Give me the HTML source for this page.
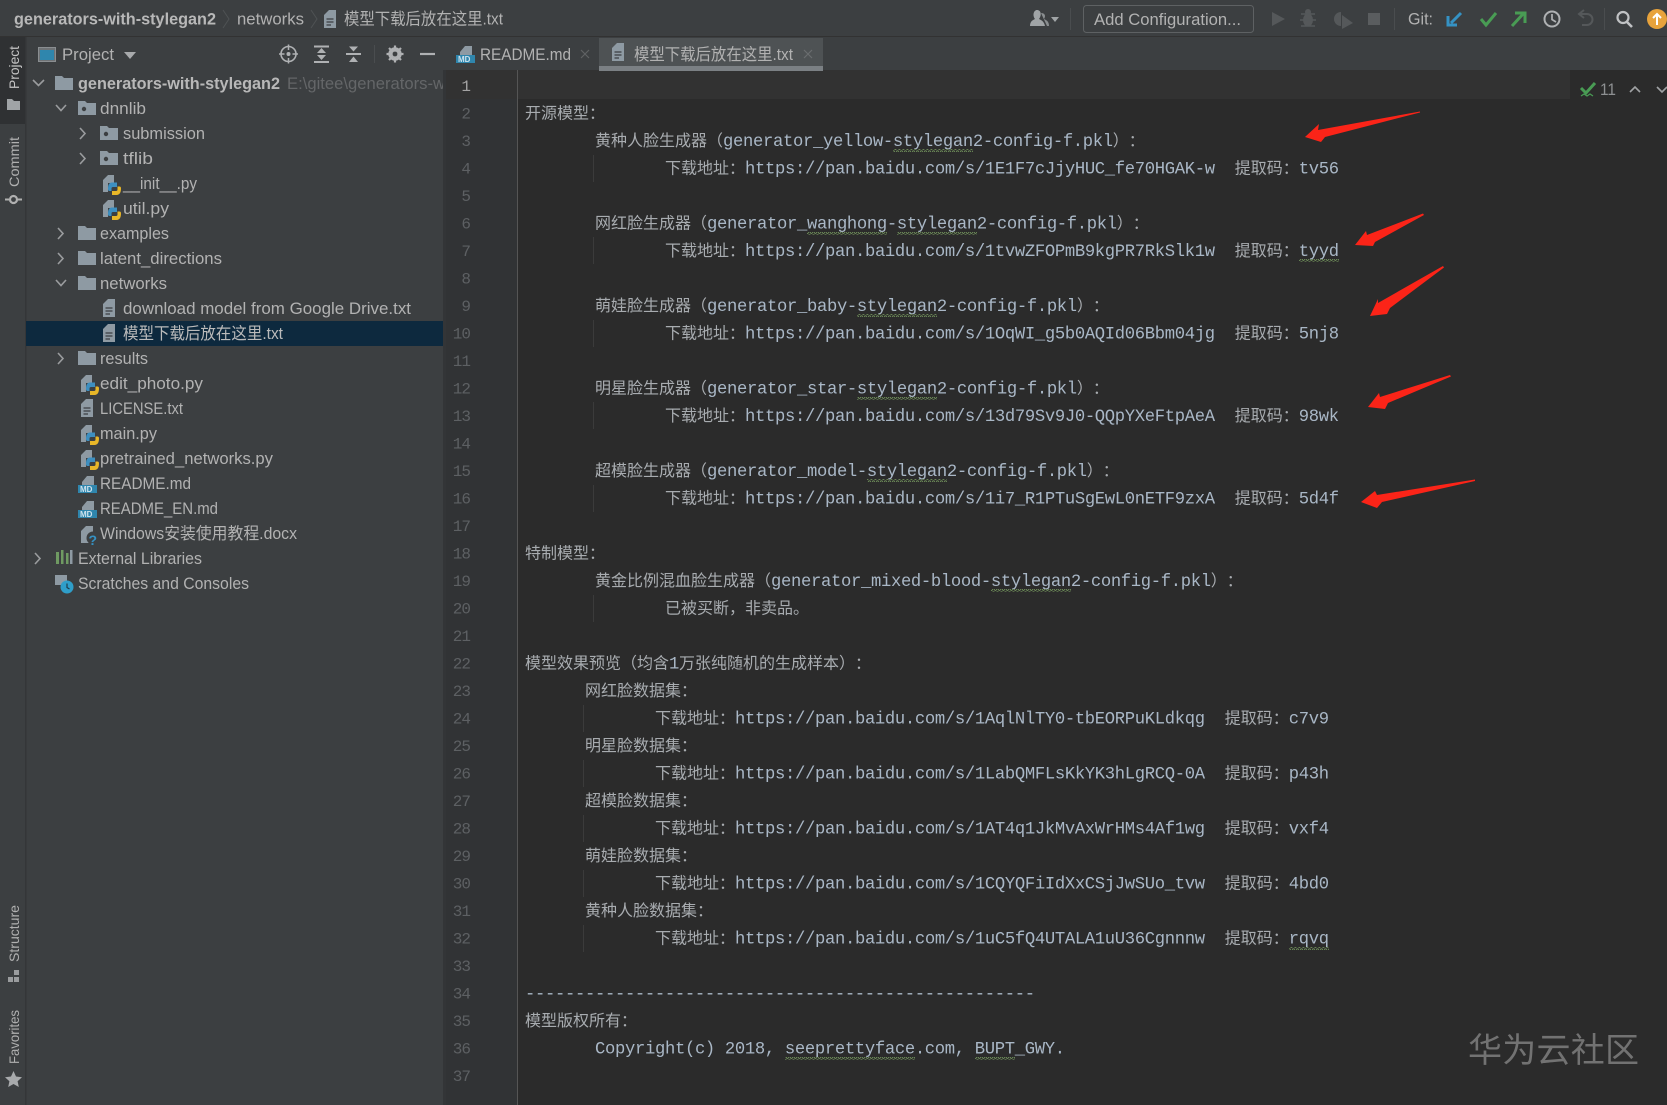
<!DOCTYPE html>
<html lang="zh"><head><meta charset="utf-8"><title>generators-with-stylegan2</title>
<style>
html,body{margin:0;padding:0;background:#2b2b2b;width:1667px;height:1105px;overflow:hidden}
svg{display:block}
text{white-space:pre;text-spacing-trim:space-all}
.u{font-family:"Liberation Sans","Noto Sans CJK SC",sans-serif;font-size:16.5px;fill:#b2b2b2}
.b{font-weight:700;fill:#b8b8b8}
.m{font-family:"Liberation Mono",monospace;font-size:17.2px;letter-spacing:-.32px;fill:#a9b7c6}
.c{font-family:"Noto Sans CJK SC",sans-serif;font-size:16px;letter-spacing:0;fill:#a8acb0}
.n{font-family:"Liberation Mono",monospace;font-size:16px;letter-spacing:-1px;fill:#5d6063;text-anchor:end}
.v{font-family:"Liberation Sans",sans-serif;font-size:14px;fill:#b0b0b0}
</style></head><body>
<svg xmlns="http://www.w3.org/2000/svg" width="1667" height="1105" viewBox="0 0 1667 1105">
<defs>
<pattern id="sq" width="4" height="3" patternUnits="userSpaceOnUse"><path d="M0 2.4L1 .8 2 .8 3 2.4 4 2.4" fill="none" stroke="#6f8f5a" stroke-width=".9"/></pattern>
<symbol id="folder" width="18" height="15" viewBox="0 0 18 15" overflow="visible"><path d="M0 1H7L9 3H18V15H0Z" fill="#8e9aa3"/></symbol>
<symbol id="pkg" width="18" height="15" viewBox="0 0 18 15" overflow="visible"><path d="M0 1H7L9 3H18V15H0Z" fill="#8e9aa3"/><circle cx="6" cy="9" r="2.2" fill="#3c3f41"/></symbol>
<symbol id="file" width="14" height="20" viewBox="0 0 14 20" overflow="visible"><path d="M1 6L6 1H13V19H1Z" fill="#8e9aa3"/><path d="M3.5 10H10.5M3.5 13H10.5M3.5 16H8" stroke="#3c3f41" stroke-width="1.2"/></symbol>
<symbol id="py" width="21" height="22" viewBox="0 0 21 22" overflow="visible"><path d="M1 6L6 1H12V9H6V18H1Z" fill="#8e9aa3"/><path d="M6 15C6 11 7 8.500 10 8.500H15V13H11Q9.500 13 9.500 14.500V17H7.500Q6 17 6 15Z" fill="#3d8fc0"/><path d="M19 14.500C19 18.500 17.500 21 14.500 21H10V17H14Q15.500 17 15.500 15.500V12.500H17.500Q19 12.500 19 14.500Z" fill="#e8b728"/></symbol>
<symbol id="md" width="20" height="20" viewBox="0 0 20 20" overflow="visible"><path d="M4 8L9 2H16V12H4Z" fill="#8e9aa3"/><rect x="0" y="11" width="19" height="8" fill="#2f86ad"/><text x="2" y="18" font-family="Liberation Sans" font-size="8" font-weight="700" fill="#cfe3ee">MD</text></symbol>
</defs>

<!-- base -->
<rect width="1667" height="1105" fill="#2b2b2b"/>
<rect width="1667" height="36" fill="#3c3f41"/>
<rect y="36" width="1667" height="1" fill="#323232"/>
<rect y="37" width="443" height="1068" fill="#3c3f41"/>
<rect x="443" y="37" width="1224" height="33" fill="#3c3f41"/>
<rect x="25" y="37" width="1.5" height="1068" fill="#343638"/>
<rect y="37" width="25" height="87" fill="#2f3133"/>
<rect x="26" y="321" width="417" height="25" fill="#0d293e"/>
<rect x="443" y="70" width="3" height="1035" fill="#333537"/>
<rect x="446" y="70" width="71" height="1035" fill="#313335"/>
<rect x="517" y="70" width="1" height="1035" fill="#555"/>
<rect x="446" y="70" width="71" height="29" fill="#323232"/>
<rect x="518" y="70" width="1052" height="29" fill="#323232"/>

<!-- title bar -->
<text class="u b" x="14" y="24.5" textLength="202" lengthAdjust="spacingAndGlyphs">generators-with-stylegan2</text>
<path d="M223 10L229 19 223 28" fill="none" stroke="#4f5254" stroke-width="1"/>
<text class="u" x="237" y="24.5" textLength="67" lengthAdjust="spacingAndGlyphs">networks</text>
<path d="M311 10L317 19 311 28" fill="none" stroke="#4f5254" stroke-width="1"/>
<use href="#file" x="323" y="9"/>
<text class="u" x="344" y="24.5" textLength="159" lengthAdjust="spacingAndGlyphs">模型下载后放在这里.txt</text>

<path d="M1030 26C1030 21 1033 20 1035 19 1032 15 1034 10 1037 10 1041 10 1042 15 1039 19 1041 20 1044 21 1045 26Z" fill="#a0a4a6"/>
<path d="M1041 13L1047 26H1049C1049 21 1046 20 1044 19 1046 16 1045 13 1041 13Z" fill="#8a8e90"/>
<path d="M1051 17H1059L1055 22Z" fill="#a0a4a6"/>
<rect x="1070" y="8" width="1" height="22" fill="#4a4d4f"/>
<rect x="1083.5" y="5.5" width="170" height="27" rx="3" fill="#3c3f41" stroke="#5e6163"/>
<text class="u" x="1094" y="25" textLength="147" lengthAdjust="spacingAndGlyphs" fill="#b2b2b2">Add Configuration...</text>
<path d="M1272 12L1285 19 1272 26Z" fill="#55585a"/>
<g fill="#55585a"><ellipse cx="1308" cy="20" rx="5" ry="6.5"/><circle cx="1308" cy="12" r="3"/><path d="M1301 14L1315 14M1300 20H1316M1301 26L1315 26" stroke="#55585a" stroke-width="1.5"/></g>
<path d="M1341 12A7 7 0 1 0 1341 26Z" fill="#55585a"/><path d="M1342 15L1353 23 1342 29Z" fill="#55585a"/>
<rect x="1368" y="13" width="12" height="12" fill="#5a5d5f"/>
<rect x="1394" y="8" width="1" height="22" fill="#4a4d4f"/>
<text class="u" x="1408" y="24.5" textLength="25" lengthAdjust="spacingAndGlyphs">Git:</text>
<path d="M1461 13L1451 23M1448 16V25H1457" fill="none" stroke="#3592c4" stroke-width="3"/>
<path d="M1481 19L1486 25 1496 13" fill="none" stroke="#499c54" stroke-width="3"/>
<path d="M1512 26L1523 14M1515 13H1525V23" fill="none" stroke="#499c54" stroke-width="3"/>
<circle cx="1552" cy="19" r="7.5" fill="none" stroke="#afb1b3" stroke-width="2"/><path d="M1552 14V19.5L1556 22" fill="none" stroke="#afb1b3" stroke-width="1.7"/>
<path d="M1580 14H1587A5 5 0 0 1 1587 25H1582M1584 10L1579 14 1584 18" fill="none" stroke="#55585a" stroke-width="2"/>
<rect x="1604" y="8" width="1" height="22" fill="#4a4d4f"/>
<circle cx="1623" cy="17.5" r="5.5" fill="none" stroke="#c0c2c4" stroke-width="2.2"/><path d="M1627 22L1632 27" stroke="#c0c2c4" stroke-width="2.6"/>
<circle cx="1657" cy="19" r="10" fill="#e8a33c"/><path d="M1657 25V14M1653 18L1657 14 1661 18" fill="none" stroke="#fff" stroke-width="2"/>

<!-- left strip -->
<text class="v" transform="translate(19 89) rotate(-90)" textLength="43" lengthAdjust="spacingAndGlyphs" style="fill:#c4c4c4">Project</text>
<path d="M7 99H12L14 101H20V110H7Z" fill="#a0a4a6"/>
<text class="v" transform="translate(19 187) rotate(-90)" textLength="50" lengthAdjust="spacingAndGlyphs">Commit</text>
<circle cx="13.5" cy="199.5" r="3.5" fill="none" stroke="#b0b0b0" stroke-width="2.2"/><path d="M5 199.5H9M18 199.5H22" stroke="#b0b0b0" stroke-width="2"/>
<text class="v" transform="translate(19 962) rotate(-90)" textLength="57" lengthAdjust="spacingAndGlyphs">Structure</text>
<path d="M8 977h5v5h-5zM14 977h5v5h-5zM14 970h5v5h-5z" fill="#9a9c9e"/>
<text class="v" transform="translate(19 1064) rotate(-90)" textLength="54" lengthAdjust="spacingAndGlyphs">Favorites</text>
<path d="M13.5 1071L16 1076.5 22 1077.3 17.6 1081.2 18.8 1087 13.5 1084 8.2 1087 9.4 1081.2 5 1077.3 11 1076.5Z" fill="#a8aaac"/>

<!-- project header -->
<rect x="38.5" y="47.5" width="17" height="14" fill="#6e7275" stroke="#8a8e91"/><rect x="40" y="50" width="14" height="10" fill="#2f86ad"/>
<text class="u" x="62" y="60" textLength="52" lengthAdjust="spacingAndGlyphs">Project</text>
<path d="M124 52H136L130 59Z" fill="#a8aaac"/>
<circle cx="288.5" cy="54" r="7.5" fill="none" stroke="#afb1b3" stroke-width="1.6"/><circle cx="288.5" cy="54" r="2" fill="#afb1b3"/><path d="M288.5 44.5V50M288.5 58V63.5M279 54H284.5M292.5 54H298" stroke="#afb1b3" stroke-width="1.5"/>
<path d="M314 46.5H329M314 62H329" stroke="#afb1b3" stroke-width="2"/><path d="M321.5 48L317 53H326ZM321.5 60L317 55H326Z" fill="#afb1b3"/>
<path d="M346 54H361" stroke="#afb1b3" stroke-width="2"/><path d="M353.5 51.5L349 46.5H358ZM353.5 56.5L349 62H358Z" fill="#afb1b3"/>
<rect x="374" y="45" width="1" height="18" fill="#4a4d4f"/>
<circle cx="395" cy="54" r="5" fill="none" stroke="#afb1b3" stroke-width="3.4"/><path d="M395 45.5V62.5M386.5 54H403.5M389 48L401 60M401 48L389 60" stroke="#afb1b3" stroke-width="2.2"/><circle cx="395" cy="54" r="2.4" fill="#3c3f41"/>
<path d="M420 54H435" stroke="#afb1b3" stroke-width="2.2"/>

<!-- tabs -->
<use href="#md" x="456" y="44"/>
<text class="u" x="480" y="60" textLength="91" lengthAdjust="spacingAndGlyphs">README.md</text>
<path d="M581 50L589 58M589 50L581 58" stroke="#5f6264" stroke-width="1.2"/>
<rect x="599" y="38" width="224" height="33" fill="#4e5254"/>
<rect x="599" y="66" width="224" height="5" fill="#7b8084"/>
<use href="#file" x="611" y="42"/>
<text class="u" x="634" y="60" textLength="159" lengthAdjust="spacingAndGlyphs">模型下载后放在这里.txt</text>
<path d="M804 50L812 58M812 50L804 58" stroke="#6a6d6f" stroke-width="1.2"/>

<!-- tree -->
<path d="M33 80L38.5 85.5 44 80" fill="none" stroke="#9a9c9e" stroke-width="1.6"/><use href="#folder" x="55" y="75"/>
<text class="u b" x="78" y="89" textLength="202" lengthAdjust="spacingAndGlyphs">generators-with-stylegan2</text>
<svg x="287" y="70" width="156" height="30"><text class="u" x="0" y="19" textLength="158" lengthAdjust="spacingAndGlyphs" style="fill:#646668">E:\gitee\generators-w</text></svg>

<path d="M56 105L61 110.5 66 105" fill="none" stroke="#9a9c9e" stroke-width="1.6"/><use href="#pkg" x="78" y="100"/>
<text class="u" x="100" y="114" textLength="46" lengthAdjust="spacingAndGlyphs">dnnlib</text>
<path d="M80 128L85 133.5 80 139" fill="none" stroke="#9a9c9e" stroke-width="1.6"/><use href="#pkg" x="100" y="125"/>
<text class="u" x="123" y="139" textLength="82" lengthAdjust="spacingAndGlyphs">submission</text>
<path d="M80 153L85 158.5 80 164" fill="none" stroke="#9a9c9e" stroke-width="1.6"/><use href="#pkg" x="100" y="150"/>
<text class="u" x="123" y="164" textLength="30" lengthAdjust="spacingAndGlyphs">tflib</text>
<use href="#py" x="102" y="174"/>
<text class="u" x="123" y="189" textLength="74" lengthAdjust="spacingAndGlyphs">__init__.py</text>
<use href="#py" x="102" y="199"/>
<text class="u" x="123" y="214" textLength="46" lengthAdjust="spacingAndGlyphs">util.py</text>
<path d="M58 228L63 233.5 58 239" fill="none" stroke="#9a9c9e" stroke-width="1.6"/><use href="#folder" x="78" y="225"/>
<text class="u" x="100" y="239" textLength="69" lengthAdjust="spacingAndGlyphs">examples</text>
<path d="M58 253L63 258.5 58 264" fill="none" stroke="#9a9c9e" stroke-width="1.6"/><use href="#folder" x="78" y="250"/>
<text class="u" x="100" y="264" textLength="122" lengthAdjust="spacingAndGlyphs">latent_directions</text>
<path d="M56 280L61 285.5 66 280" fill="none" stroke="#9a9c9e" stroke-width="1.6"/><use href="#folder" x="78" y="275"/>
<text class="u" x="100" y="289" textLength="67" lengthAdjust="spacingAndGlyphs">networks</text>
<use href="#file" x="102" y="298"/>
<text class="u" x="123" y="314" textLength="288" lengthAdjust="spacingAndGlyphs">download model from Google Drive.txt</text>
<use href="#file" x="102" y="323"/>
<text class="u" x="123" y="339" textLength="160" lengthAdjust="spacingAndGlyphs" style="fill:#bbb">模型下载后放在这里.txt</text>
<path d="M58 353L63 358.5 58 364" fill="none" stroke="#9a9c9e" stroke-width="1.6"/><use href="#folder" x="78" y="350"/>
<text class="u" x="100" y="364" textLength="48" lengthAdjust="spacingAndGlyphs">results</text>
<use href="#py" x="80" y="374"/>
<text class="u" x="100" y="389" textLength="103" lengthAdjust="spacingAndGlyphs">edit_photo.py</text>
<use href="#file" x="80" y="398"/>
<text class="u" x="100" y="414" textLength="83" lengthAdjust="spacingAndGlyphs">LICENSE.txt</text>
<use href="#py" x="80" y="424"/>
<text class="u" x="100" y="439" textLength="57" lengthAdjust="spacingAndGlyphs">main.py</text>
<use href="#py" x="80" y="449"/>
<text class="u" x="100" y="464" textLength="173" lengthAdjust="spacingAndGlyphs">pretrained_networks.py</text>
<use href="#md" x="78" y="474"/>
<text class="u" x="100" y="489" textLength="91" lengthAdjust="spacingAndGlyphs">README.md</text>
<use href="#md" x="78" y="499"/>
<text class="u" x="100" y="514" textLength="118" lengthAdjust="spacingAndGlyphs">README_EN.md</text>
<path d="M81 531L86 526H93V543H81Z" fill="#8e9aa3"/>
<circle cx="93" cy="538" r="6.500" fill="#3c3f41"/>
<text x="88.500" y="545" font-family="Liberation Sans" font-size="14" font-weight="700" fill="#3592c4">?</text>
<text class="u" x="100" y="539" textLength="197" lengthAdjust="spacingAndGlyphs">Windows安装使用教程.docx</text>
<path d="M35 553L40 558.5 35 564" fill="none" stroke="#9a9c9e" stroke-width="1.6"/>
<path d="M56 552v12h3v-12zM61 550v14h2.5v-14zM66 553v11h2.5v-11z" fill="#6f9a62"/><path d="M70 550v14h2.5v-14z" fill="#8e9aa3"/>
<text class="u" x="78" y="564" textLength="124" lengthAdjust="spacingAndGlyphs">External Libraries</text>
<path d="M55 575H67V585H55Z" fill="#8e9aa3"/><circle cx="67" cy="587" r="6.5" fill="#2f9ec9"/><path d="M67 583.5V587.5L69.5 589" fill="none" stroke="#1d3c4c" stroke-width="1.2"/>
<text class="u" x="78" y="589" textLength="171" lengthAdjust="spacingAndGlyphs">Scratches and Consoles</text>

<!-- line numbers -->
<text class="n" x="470" y="91" style="fill:#a4a3a3">1</text>
<text class="n" x="470" y="118.5">2</text><text class="n" x="470" y="146">3</text><text class="n" x="470" y="173.5">4</text><text class="n" x="470" y="201">5</text><text class="n" x="470" y="228.5">6</text><text class="n" x="470" y="256">7</text><text class="n" x="470" y="283.5">8</text><text class="n" x="470" y="311">9</text><text class="n" x="470" y="338.5">10</text><text class="n" x="470" y="366">11</text><text class="n" x="470" y="393.5">12</text><text class="n" x="470" y="421">13</text><text class="n" x="470" y="448.5">14</text><text class="n" x="470" y="476">15</text><text class="n" x="470" y="503.5">16</text><text class="n" x="470" y="531">17</text><text class="n" x="470" y="558.5">18</text><text class="n" x="470" y="586">19</text><text class="n" x="470" y="613.5">20</text><text class="n" x="470" y="641">21</text><text class="n" x="470" y="668.5">22</text><text class="n" x="470" y="696">23</text><text class="n" x="470" y="723.5">24</text><text class="n" x="470" y="751">25</text><text class="n" x="470" y="778.5">26</text><text class="n" x="470" y="806">27</text><text class="n" x="470" y="833.5">28</text><text class="n" x="470" y="861">29</text><text class="n" x="470" y="888.5">30</text><text class="n" x="470" y="916">31</text><text class="n" x="470" y="943.5">32</text><text class="n" x="470" y="971">33</text><text class="n" x="470" y="998.5">34</text><text class="n" x="470" y="1026">35</text><text class="n" x="470" y="1053.5">36</text><text class="n" x="470" y="1081">37</text>

<!-- indent guides -->
<g fill="#3b3b3b"><rect x="593" y="155" width="1" height="27"/><rect x="593" y="237" width="1" height="27"/><rect x="593" y="320" width="1" height="27"/><rect x="593" y="402" width="1" height="27"/><rect x="593" y="485" width="1" height="27"/><rect x="593" y="595" width="1" height="27"/><rect x="583" y="705" width="1" height="27"/><rect x="583" y="760" width="1" height="27"/><rect x="583" y="815" width="1" height="27"/><rect x="583" y="870" width="1" height="27"/><rect x="583" y="925" width="1" height="27"/></g>

<!-- code -->
<text class="m" x="525" y="118.5"><tspan class="c">开源模型：</tspan></text>
<text class="m" x="595" y="146"><tspan class="c">黄种人脸生成器（</tspan>generator_yellow-stylegan2-config-f.pkl<tspan class="c">）：</tspan></text>
<text class="m" x="665" y="173.5"><tspan class="c">下载地址：</tspan>https://pan.baidu.com/s/1E1F7cJjyHUC_fe70HGAK-w  <tspan class="c">提取码：</tspan>tv56</text>
<text class="m" x="595" y="228.5"><tspan class="c">网红脸生成器（</tspan>generator_wanghong-stylegan2-config-f.pkl<tspan class="c">）：</tspan></text>
<text class="m" x="665" y="256"><tspan class="c">下载地址：</tspan>https://pan.baidu.com/s/1tvwZFOPmB9kgPR7RkSlk1w  <tspan class="c">提取码：</tspan>tyyd</text>
<text class="m" x="595" y="311"><tspan class="c">萌娃脸生成器（</tspan>generator_baby-stylegan2-config-f.pkl<tspan class="c">）：</tspan></text>
<text class="m" x="665" y="338.5"><tspan class="c">下载地址：</tspan>https://pan.baidu.com/s/1OqWI_g5b0AQId06Bbm04jg  <tspan class="c">提取码：</tspan>5nj8</text>
<text class="m" x="595" y="393.5"><tspan class="c">明星脸生成器（</tspan>generator_star-stylegan2-config-f.pkl<tspan class="c">）：</tspan></text>
<text class="m" x="665" y="421"><tspan class="c">下载地址：</tspan>https://pan.baidu.com/s/13d79Sv9J0-QQpYXeFtpAeA  <tspan class="c">提取码：</tspan>98wk</text>
<text class="m" x="595" y="476"><tspan class="c">超模脸生成器（</tspan>generator_model-stylegan2-config-f.pkl<tspan class="c">）：</tspan></text>
<text class="m" x="665" y="503.5"><tspan class="c">下载地址：</tspan>https://pan.baidu.com/s/1i7_R1PTuSgEwL0nETF9zxA  <tspan class="c">提取码：</tspan>5d4f</text>
<text class="m" x="525" y="558.5"><tspan class="c">特制模型：</tspan></text>
<text class="m" x="595" y="586"><tspan class="c">黄金比例混血脸生成器（</tspan>generator_mixed-blood-stylegan2-config-f.pkl<tspan class="c">）：</tspan></text>
<text class="m" x="665" y="613.5"><tspan class="c">已被买断，非卖品。</tspan></text>
<text class="m" x="525" y="668.5"><tspan class="c">模型效果预览（均含</tspan>1<tspan class="c">万张纯随机的生成样本）：</tspan></text>
<text class="m" x="585" y="696"><tspan class="c">网红脸数据集：</tspan></text>
<text class="m" x="655" y="723.5"><tspan class="c">下载地址：</tspan>https://pan.baidu.com/s/1AqlNlTY0-tbEORPuKLdkqg  <tspan class="c">提取码：</tspan>c7v9</text>
<text class="m" x="585" y="751"><tspan class="c">明星脸数据集：</tspan></text>
<text class="m" x="655" y="778.5"><tspan class="c">下载地址：</tspan>https://pan.baidu.com/s/1LabQMFLsKkYK3hLgRCQ-0A  <tspan class="c">提取码：</tspan>p43h</text>
<text class="m" x="585" y="806"><tspan class="c">超模脸数据集：</tspan></text>
<text class="m" x="655" y="833.5"><tspan class="c">下载地址：</tspan>https://pan.baidu.com/s/1AT4q1JkMvAxWrHMs4Af1wg  <tspan class="c">提取码：</tspan>vxf4</text>
<text class="m" x="585" y="861"><tspan class="c">萌娃脸数据集：</tspan></text>
<text class="m" x="655" y="888.5"><tspan class="c">下载地址：</tspan>https://pan.baidu.com/s/1CQYQFiIdXxCSjJwSUo_tvw  <tspan class="c">提取码：</tspan>4bd0</text>
<text class="m" x="585" y="916"><tspan class="c">黄种人脸数据集：</tspan></text>
<text class="m" x="655" y="943.5"><tspan class="c">下载地址：</tspan>https://pan.baidu.com/s/1uC5fQ4UTALA1uU36Cgnnnw  <tspan class="c">提取码：</tspan>rqvq</text>
<text class="m" x="525" y="998.5">---------------------------------------------------</text>
<text class="m" x="525" y="1026"><tspan class="c">模型版权所有：</tspan></text>
<text class="m" x="595" y="1053.5">Copyright(c) 2018, seeprettyface.com, BUPT_GWY.</text>

<!-- squiggles -->
<g fill="url(#sq)">
<rect x="893" y="149" width="80" height="3"/>
<rect x="807" y="232" width="80" height="3"/><rect x="897" y="232" width="80" height="3"/>
<rect x="1299" y="259" width="40" height="3"/>
<rect x="857" y="314" width="80" height="3"/>
<rect x="857" y="397" width="80" height="3"/>
<rect x="867" y="479" width="80" height="3"/>
<rect x="991" y="589" width="80" height="3"/>
<rect x="1289" y="947" width="40" height="3"/>
<rect x="785" y="1057" width="130" height="3"/>
<rect x="975" y="1057" width="40" height="3"/>
</g>

<!-- inspection widget -->
<path d="M1581 88L1586 93 1595 83" fill="none" stroke="#499c54" stroke-width="3"/>
<path d="M1581 96L1584 94 1587 96 1590 94 1593 96" fill="none" stroke="#499c54" stroke-width="1.2"/>
<text class="u" x="1600" y="95" textLength="16" lengthAdjust="spacingAndGlyphs" style="fill:#8e9092">11</text>
<path d="M1630 92L1635 87 1640 92" fill="none" stroke="#a0a2a4" stroke-width="1.6"/>
<path d="M1657 87L1662 92 1667 87" fill="none" stroke="#a0a2a4" stroke-width="1.6"/>

<!-- arrows -->
<g fill="#fb2418">
<path d="M1420 111.500L1420 112.500 1325 137 1321 142 1305 137 1319 124 1318 130Z"/>
<path d="M1423 213.500L1424 215 1375 242 1373 246 1355 245 1366 231 1367 235Z"/>
<path d="M1443 266L1444 267.500 1390 308 1387 314 1370 316 1378 299 1378 303Z"/>
<path d="M1450 375L1451 376.500 1388 403 1385 409 1368 407 1379 393 1380 397Z"/>
<path d="M1475 479.500L1475 481 1382 502 1377 508 1361 502 1375 491 1377 495Z"/>
</g>

<!-- watermark -->
<text x="1468" y="1062" font-family="Noto Sans CJK SC,sans-serif" font-size="34" fill="#727272" textLength="171">华为云社区</text>
</svg>
</body></html>
